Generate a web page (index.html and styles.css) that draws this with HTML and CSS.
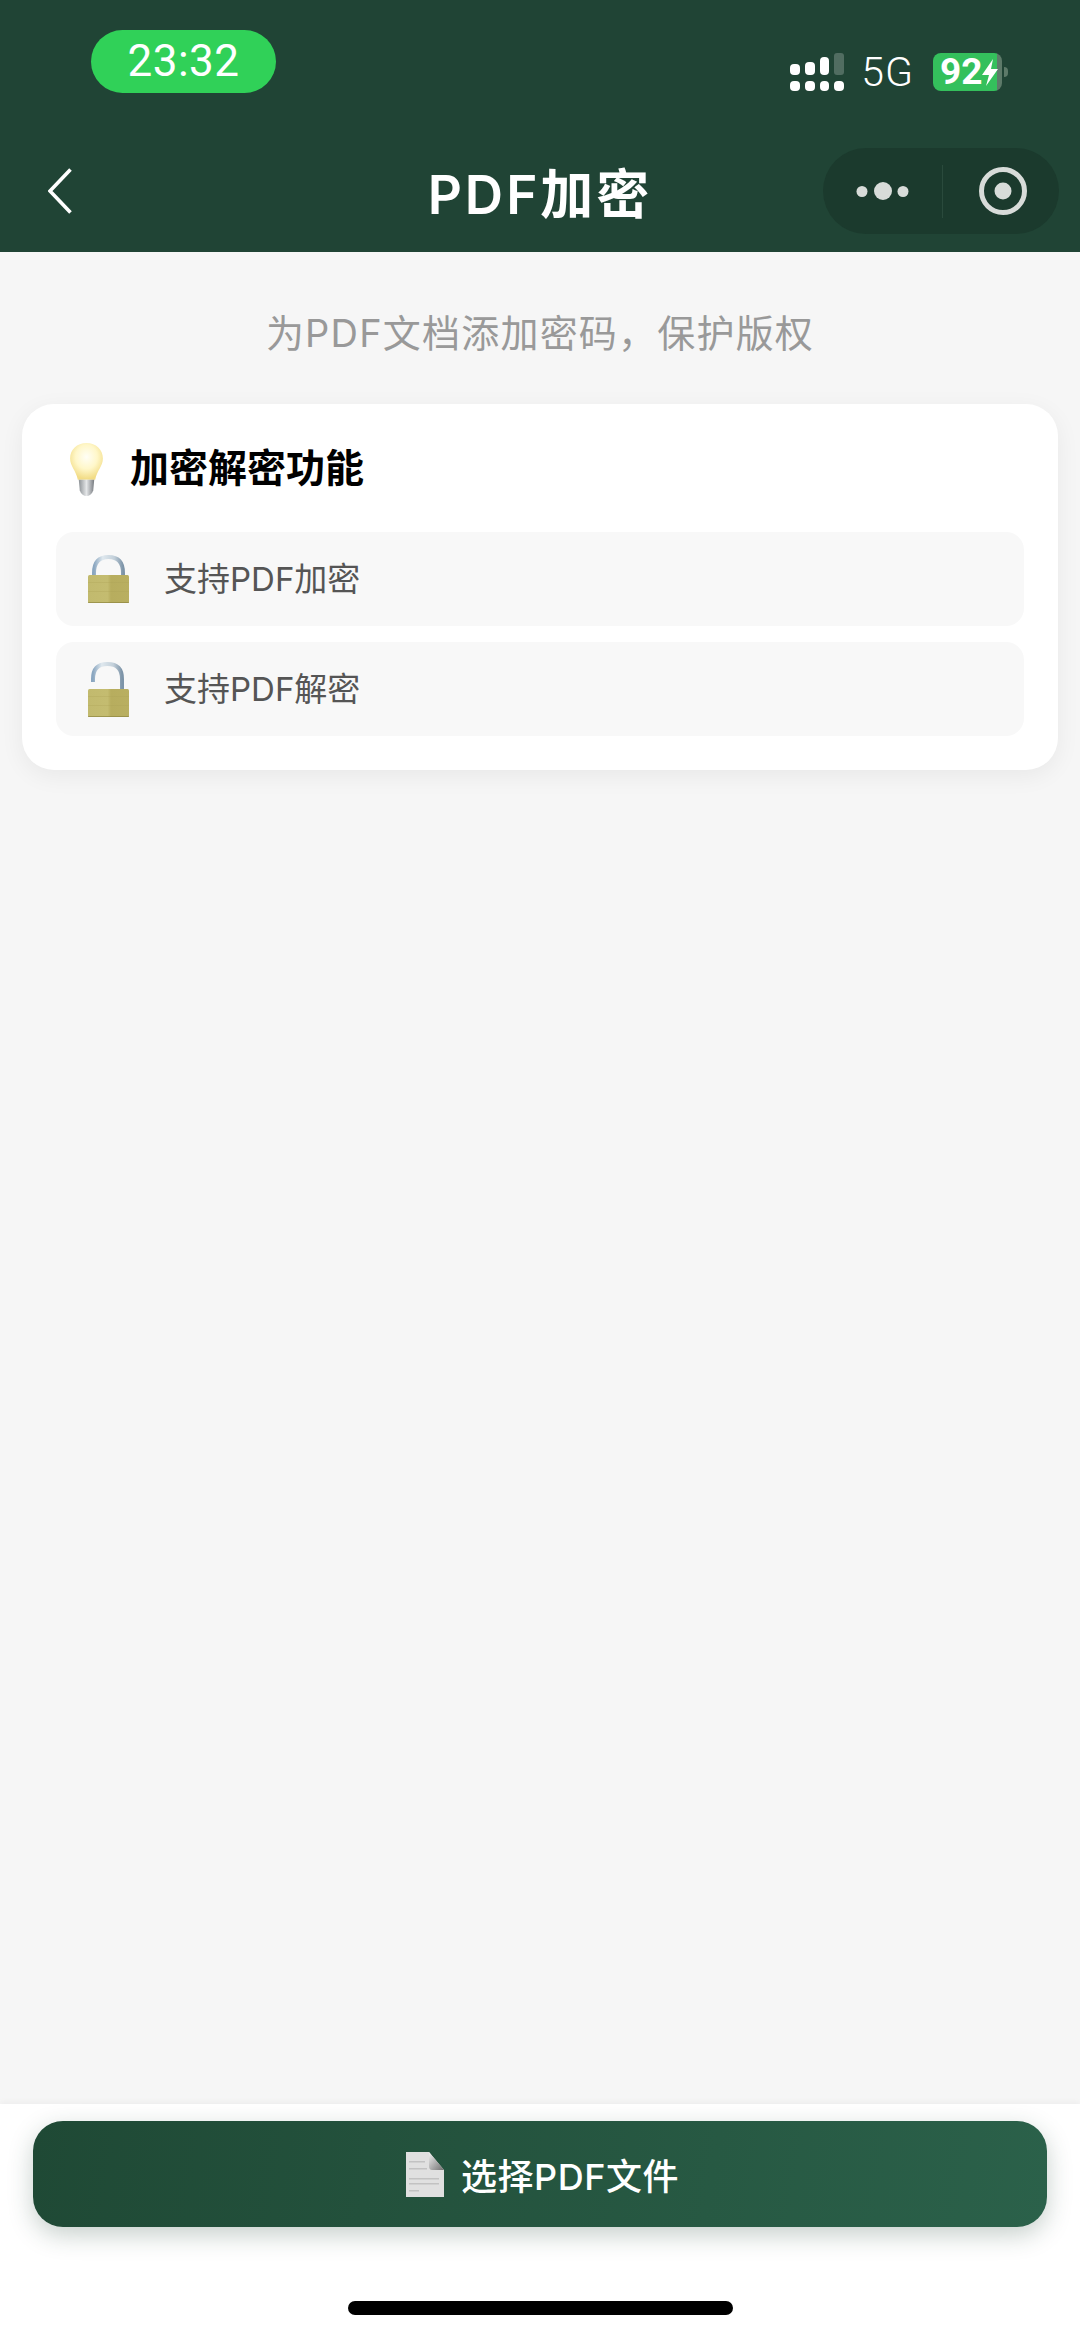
FILE: index.html
```html
<!DOCTYPE html>
<html lang="zh-CN">
<head>
  <meta charset="UTF-8" />
  <meta name="viewport" content="width=device-width, initial-scale=1.0"/>
  <title>PDF加密</title>
  <link rel="stylesheet" href="styles.css">
</head>
<body>
  <div class="page">

    <div class="header">
      <div class="status-bar">
        <div class="time">23:32</div>
        <div class="status-right">
          <svg class="signal" width="54" height="38" viewBox="0 0 54 38">
            <g fill="#fff">
              <rect x="0" y="11" width="10" height="11" rx="4"/>
              <rect x="15" y="9" width="10" height="13" rx="4"/>
              <rect x="30" y="4" width="9" height="18" rx="4"/>
              <rect x="44" y="0" width="10" height="22" rx="3" opacity="0.22"/>
              <rect x="0" y="28" width="10" height="10" rx="4"/>
              <rect x="15" y="28" width="10" height="10" rx="4"/>
              <rect x="30" y="28" width="9" height="10" rx="4"/>
              <rect x="44" y="28" width="10" height="10" rx="4"/>
            </g>
          </svg>
          <span class="network">5G</span>
          <div class="battery">
            <div class="battery-body">
              <span class="battery-num">92</span>
              <svg class="battery-bolt" width="18" height="27" viewBox="0 0 18 27"><path d="M12 0 L1 16 H8 L5 27 L17 10 H10 Z" fill="#fff"/></svg>
            </div>
            <div class="battery-nub"></div>
          </div>
        </div>
      </div>

      <div class="nav-bar">
        <div class="nav-left">
          <svg width="24" height="46" viewBox="0 0 24 46"><path d="M22.5 1.5 L2 23 L22.5 44.5" fill="none" stroke="#fff" stroke-width="3.6"/></svg>
        </div>
        <div class="nav-title">PDF加密</div>
        <div class="nav-right">
          <div class="capsule">
            <svg class="capsule-dots" width="64" height="18" viewBox="0 0 64 18">
              <circle cx="6" cy="9.500" r="5.500" fill="#d8dcd9"/>
              <circle cx="27" cy="9" r="9" fill="#d8dcd9"/>
              <circle cx="47" cy="9.500" r="5.500" fill="#d8dcd9"/>
            </svg>
            <div class="capsule-line"></div>
            <svg class="capsule-ring" width="48" height="48" viewBox="0 0 48 48">
              <circle cx="24" cy="24" r="21.500" fill="none" stroke="#d8dcd9" stroke-width="5"/>
              <circle cx="24" cy="24" r="8.500" fill="#d8dcd9"/>
            </svg>
          </div>
        </div>
      </div>
    </div>

    <div class="content">
      <p class="subtitle">为PDF文档添加密码，保护版权</p>

      <div class="card">
        <div class="card-title">
          <svg class="bulb" width="33" height="54" viewBox="0 0 34 56">
            <defs>
              <radialGradient id="glass" cx="0.5" cy="0.38" r="0.6">
                <stop offset="0" stop-color="#fffef6"/>
                <stop offset="0.55" stop-color="#fff7c9"/>
                <stop offset="1" stop-color="#f2dc86"/>
              </radialGradient>
              <linearGradient id="screw" x1="0" y1="0" x2="1" y2="0">
                <stop offset="0" stop-color="#8d9296"/>
                <stop offset="0.5" stop-color="#e4e6e8"/>
                <stop offset="1" stop-color="#777b80"/>
              </linearGradient>
            </defs>
            <path d="M17 0 C7 0 0 7 0 16 C0 24 6 28 8 38 H26 C28 28 34 24 34 16 C34 7 27 0 17 0 Z" fill="url(#glass)"/>
            <path d="M9 38 H25 L24 49 C23 53 20 55 17 55 C14 55 11 53 10 49 Z" fill="url(#screw)"/>
          </svg>
          <span>加密解密功能</span>
        </div>

        <div class="feature">
          <svg class="lock" width="41" height="48" viewBox="0 0 41 48">
            <defs>
              <linearGradient id="brass" x1="0" y1="0" x2="1" y2="0">
                <stop offset="0" stop-color="#c2ba6e"/>
                <stop offset="0.48" stop-color="#c4bc70"/>
                <stop offset="0.56" stop-color="#b7ad5e"/>
                <stop offset="1" stop-color="#b9af61"/>
              </linearGradient>
              <linearGradient id="steel" x1="0" y1="0" x2="1" y2="0">
                <stop offset="0" stop-color="#8aa6c0"/>
                <stop offset="0.3" stop-color="#dfe8ee"/>
                <stop offset="0.7" stop-color="#c3d0da"/>
                <stop offset="1" stop-color="#7d94a8"/>
              </linearGradient>
            </defs>
            <path d="M6 22 V18 C6 7 11 2 20.500 2 C30 2 35 7 35 18 V22" fill="none" stroke="url(#steel)" stroke-width="4"/>
            <rect x="0" y="20" width="41" height="28" rx="1.500" fill="url(#brass)"/>
            <rect x="0" y="27" width="41" height="1" fill="#aca255" opacity="0.3"/>
            <rect x="0" y="36" width="41" height="1" fill="#aca255" opacity="0.3"/>
            <rect x="0" y="47" width="41" height="1" fill="#8f8640" opacity="0.7"/>
          </svg>
          <span>支持PDF加密</span>
        </div>

        <div class="feature">
          <svg class="lock" width="41" height="55" viewBox="0 0 41 55">
            <path d="M5 20 V17 C5 7 10 2 19.500 2 C29 2 34 7 34 17 V30" fill="none" stroke="url(#steel)" stroke-width="4"/>
            <rect x="0" y="27" width="41" height="28" rx="1.500" fill="url(#brass)"/>
            <rect x="0" y="34" width="41" height="1" fill="#aca255" opacity="0.3"/>
            <rect x="0" y="43" width="41" height="1" fill="#aca255" opacity="0.3"/>
            <rect x="0" y="54" width="41" height="1" fill="#8f8640" opacity="0.7"/>
          </svg>
          <span>支持PDF解密</span>
        </div>
      </div>
    </div>

    <div class="footer">
      <div class="pick-btn">
        <svg class="doc" width="38" height="45" viewBox="0 0 38 45">
          <defs>
            <linearGradient id="fold" x1="0" y1="0" x2="1" y2="1">
              <stop offset="0" stop-color="#f2f2f2"/>
              <stop offset="1" stop-color="#6e6e6e"/>
            </linearGradient>
          </defs>
          <path d="M0 0 H23 L38 18 V45 H0 Z" fill="#e0e0e0"/>
          <path d="M23 0 L38 18 H26 Q23 18 23 14 Z" fill="url(#fold)"/>
          <g fill="#c2c2c2">
            <rect x="3" y="9" width="16" height="1.500"/>
            <rect x="3" y="16" width="18" height="1.500"/>
            <rect x="3" y="26" width="30" height="1.500"/>
            <rect x="3" y="31" width="30" height="1.500"/>
            <rect x="3" y="38" width="10" height="1.500"/>
          </g>
        </svg>
        <span>选择PDF文件</span>
      </div>
      <div class="home-bar"></div>
    </div>

  </div>
</body>
</html>
```

FILE: styles.css
```css
* {
  box-sizing: border-box;
}
body {
  margin: 0;
  font-family: Inter, "Noto Sans CJK SC", sans-serif;
  background: #f6f6f6;
}
.page {
  display: flex;
  flex-direction: column;
  height: 2337px;
}

/* top bar */
.header {
  height: 252px;
  background: #204435;
  color: white;
  flex-shrink: 0;
}
.status-bar {
  display: flex;
  justify-content: space-between;
  align-items: flex-start;
  height: 92px;
  padding: 30px 72px 0 91px;
}
.time {
  width: 185px;
  height: 63px;
  border-radius: 32px;
  background: #30d158;
  font-family: Roboto, sans-serif;
  font-size: 44px;
  line-height: 63px;
  text-align: center;
  letter-spacing: 0.5px;
}
.status-right {
  display: flex;
  align-items: center;
  margin-top: 22px;
}
.network {
  margin-left: 17px;
  font-family: Roboto, sans-serif;
  font-size: 41px;
  font-weight: 300;
  line-height: 40px;
  letter-spacing: 1px;
}
.battery {
  display: flex;
  align-items: center;
  margin-left: 19px;
}
.battery-body {
  display: flex;
  align-items: center;
  width: 69px;
  height: 38px;
  padding-left: 7px;
  border-radius: 8px;
  background: linear-gradient(to right, #34c05c 93%, #5d7a69 93%);
}
.battery-num {
  font-family: Roboto, sans-serif;
  font-size: 37px;
  font-weight: 700;
  line-height: 38px;
}
.battery-bolt {
  flex-shrink: 0;
  margin-left: -1px;
}
.battery-nub {
  width: 4px;
  height: 10px;
  margin-left: 2px;
  border-radius: 0 4px 4px 0;
  background: #5d7a69;
}

.nav-bar {
  display: grid;
  grid-template-columns: 1fr auto 1fr;
  align-items: center;
  height: 86px;
  margin-top: 56px;
}
.nav-left {
  display: flex;
  padding-left: 48px;
}
.nav-title {
  font-size: 53px;
  font-weight: 600;
  letter-spacing: 3px;
}
.nav-right {
  display: flex;
  justify-content: flex-end;
  padding-right: 21px;
}
.capsule {
  display: flex;
  align-items: center;
  width: 236px;
  height: 86px;
  padding-left: 33px;
  border-radius: 43px;
  background: #1b3a2d;
}
.capsule-line {
  width: 1px;
  height: 53px;
  margin-left: 22px;
  background: #2a4a3c;
}
.capsule-ring {
  margin-left: 36px;
}

/* main area */
.content {
  flex: 1;
  padding: 0 22px;
}
.subtitle {
  margin: 56px 0 46px;
  font-size: 38px;
  line-height: 50px;
  text-align: center;
  color: #999;
  letter-spacing: 1.200px;
}
.card {
  height: 366px;
  padding: 0 34px;
  border-radius: 32px;
  background: white;
  box-shadow: 0 6px 24px rgba(0, 0, 0, 0.06);
}
.card-title {
  display: flex;
  align-items: center;
  height: 128px;
  padding: 0 0 6px 14px;
  font-size: 39px;
  font-weight: 700;
  color: #000;
}
.card-title span {
  margin-left: 27px;
}
.bulb {
  flex-shrink: 0;
  margin-top: 9px;
}
.feature {
  display: flex;
  align-items: center;
  height: 94px;
  margin-bottom: 16px;
  padding-left: 32px;
  border-radius: 18px;
  background: #f8f8f8;
  font-size: 33px;
  color: #555;
}
.feature span {
  margin-left: 35px;
  padding-bottom: 4px;
}
.lock {
  flex-shrink: 0;
}

/* bottom bar */
.footer {
  height: 233px;
  padding: 17px 33px 0;
  background: white;
  flex-shrink: 0;
  box-shadow: 0 -2px 6px rgba(0, 0, 0, 0.04);
}
.pick-btn {
  display: flex;
  align-items: center;
  justify-content: center;
  height: 106px;
  padding-left: 5px;
  border-radius: 30px;
  background: linear-gradient(100deg, #1f4935, #2b614a);
  box-shadow: 0 8px 24px rgba(32, 68, 53, 0.25);
  color: white;
  font-size: 36px;
  font-weight: 500;
  letter-spacing: 0.500px;
}
.pick-btn span {
  margin-left: 17px;
}
.home-bar {
  width: 385px;
  height: 14px;
  margin: 74px auto 0;
  border-radius: 7px;
  background: black;
}
```
